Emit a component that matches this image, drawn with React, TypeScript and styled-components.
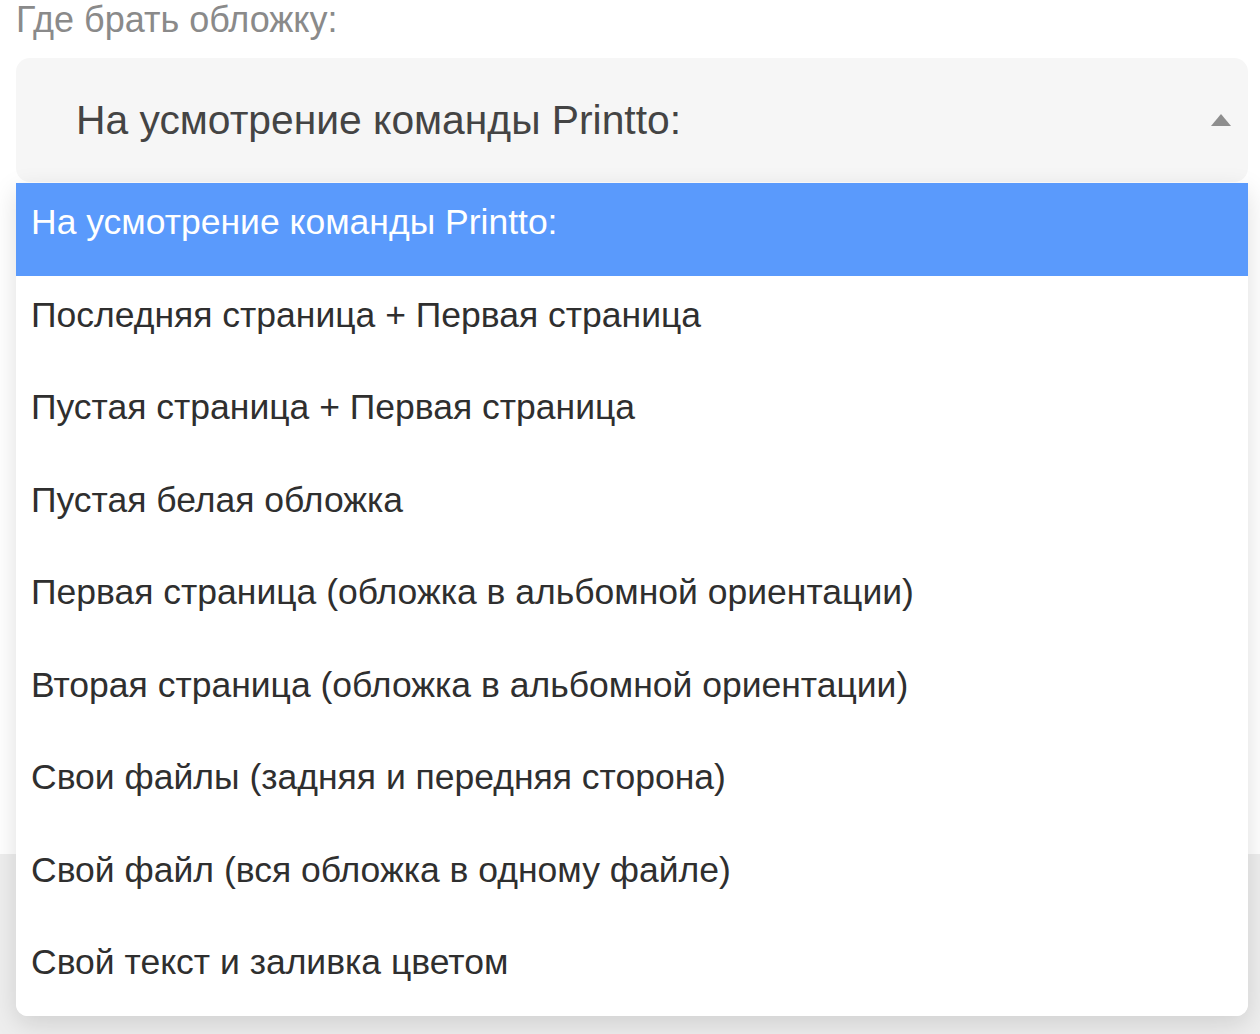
import styled, { createGlobalStyle } from "styled-components";

const GlobalStyle = createGlobalStyle`
  html, body {
    margin: 0;
    padding: 0;
    background: #ffffff;
    font-family: "Liberation Sans", Arial, Helvetica, sans-serif;
  }
  #root {
    min-height: 1034px;
  }
`;

const Page = styled.div`
  display: flex;
  flex-direction: column;
  min-height: 1034px;
`;

const Form = styled.div`
  display: flex;
  flex-direction: column;
  padding: 0 12px 0 16px;
`;

const Label = styled.div`
  font-size: 36px;
  line-height: 40px;
  color: #8a8a8a;
  margin-bottom: 18px;
`;

const SelectWrap = styled.div`
  position: relative;
`;

const SelectBox = styled.div`
  height: 124px;
  display: flex;
  align-items: center;
  justify-content: space-between;
  padding: 0 16px 0 60px;
  background: #f6f6f6;
  border-radius: 14px;
  color: #444444;
  font-size: 40.8px;
`;

const Arrow = styled.svg`
  width: 20px;
  height: 12px;
  margin-right: 1px;
`;

const Menu = styled.ul`
  position: absolute;
  top: 125px;
  left: 0;
  right: 0;
  margin: 0;
  padding: 0;
  list-style: none;
  background: #ffffff;
  border-radius: 0 0 12px 12px;
  box-shadow: 0 8px 26px rgba(0, 0, 0, 0.13);
  overflow: hidden;
  z-index: 10;
`;

const Option = styled.li<{ $active?: boolean }>`
  height: 92.5px;
  display: flex;
  align-items: center;
  padding: 0 15px 13px;
  box-sizing: border-box;
  font-size: 35.5px;
  color: ${(p) => (p.$active ? "#ffffff" : "#2f2f2f")};
  background: ${(p) => (p.$active ? "#5a9afc" : "#ffffff")};
  white-space: nowrap;
`;

// input that sits behind the open menu; only its right border shows
const Field = styled.div`
  margin-top: 395px;
  height: 172px;
  border: 1px solid #b8dcee;
  border-radius: 6px;
`;

const Footer = styled.div`
  margin-top: 103px;
  flex: 1;
  background: #eeeeee;
`;

const options = [
  "На усмотрение команды Printto:",
  "Последняя страница + Первая страница",
  "Пустая страница + Первая страница",
  "Пустая белая обложка",
  "Первая страница (обложка в альбомной ориентации)",
  "Вторая страница (обложка в альбомной ориентации)",
  "Свои файлы (задняя и передняя сторона)",
  "Свой файл (вся обложка в одному файле)",
  "Свой текст и заливка цветом",
];

export default function App() {
  return (
    <>
      <GlobalStyle />
      <Page>
        <Form>
          <Label>Где брать обложку:</Label>
          <SelectWrap>
            <SelectBox>
              <span>{options[0]}</span>
              <Arrow viewBox="0 0 20 12">
                <polygon points="10,0 20,12 0,12" fill="#8e8e8e" />
              </Arrow>
            </SelectBox>
            <Menu>
              {options.map((o, i) => (
                <Option key={o} $active={i === 0}>
                  {o}
                </Option>
              ))}
            </Menu>
          </SelectWrap>
          <Field />
        </Form>
        <Footer />
      </Page>
    </>
  );
}
